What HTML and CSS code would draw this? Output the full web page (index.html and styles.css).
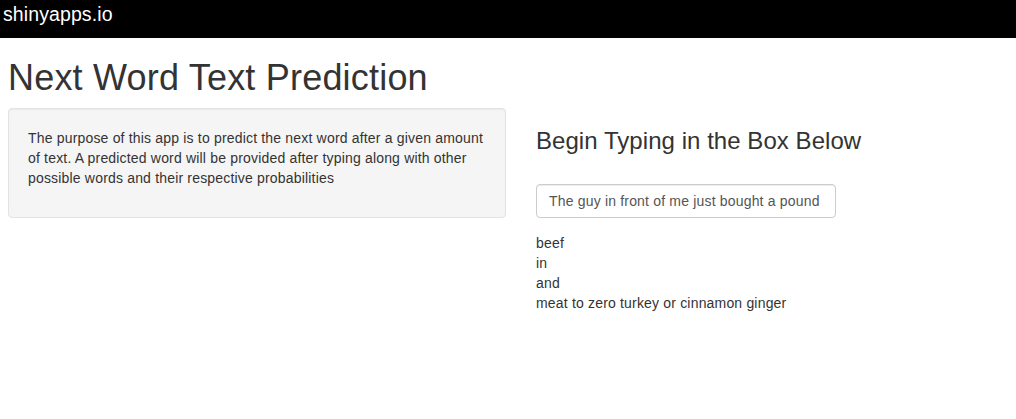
FILE: index.html
```html
<!DOCTYPE html>
<html>
<head>
<meta charset="utf-8">
<title>Next Word Text Prediction</title>
<link rel="stylesheet" href="styles.css">
</head>
<body>
<header class="topbar"><span class="brand">shinyapps.io</span></header>
<main class="page">
  <h1 class="title">Next Word Text Prediction</h1>
  <div class="row">
    <div class="col-left">
      <div class="well">
        <p>The purpose of this app is to predict the next word after a given amount of text. A predicted word will be provided after typing along with other possible words and their respective probabilities</p>
      </div>
    </div>
    <div class="col-right">
      <h3 class="subtitle">Begin Typing in the Box Below</h3>
      <div class="form-group">
        <input class="form-control" type="text" value="The guy in front of me just bought a pound">
      </div>
      <div class="output">
        <div>beef</div>
        <div>in</div>
        <div>and</div>
        <div>meat to zero turkey or cinnamon ginger</div>
      </div>
    </div>
  </div>
</main>
</body>
</html>
```

FILE: styles.css
```css
* { box-sizing: border-box; }
html, body { margin: 0; padding: 0; background: #fff; }
body {
  font-family: "Liberation Sans", Arial, Helvetica, sans-serif;
  font-size: 14px;
  line-height: 20px;
  color: #333;
  letter-spacing: 0.18px;
}
.topbar {
  background: #000;
  height: 38px;
  padding-left: 3px;
  display: flex;
  align-items: flex-start;
}
.brand {
  color: #fff;
  font-size: 19.5px;
  line-height: 20px;
  margin-top: 4px;
  letter-spacing: 0.1px;
}
.page { padding: 0 8px; }
.title {
  font-size: 36px;
  font-weight: 500;
  line-height: 1.1;
  margin: 20px 0 10px;
  letter-spacing: 0.2px;
}
.row {
  display: flex;
  align-items: flex-start;
}
.col-left { width: 498px; }
.col-right { margin-left: 30px; }
.well {
  background: #f5f5f5;
  border: 1px solid #e3e3e3;
  border-radius: 4px;
  padding: 19px;
  box-shadow: inset 0 1px 1px rgba(0,0,0,0.05);
  min-height: 110px;
}
.well p { margin: 0 0 10px; }
.subtitle {
  font-size: 24px;
  font-weight: 500;
  line-height: 1.1;
  margin: 20px 0 30px;
  letter-spacing: 0.05px;
}
.form-group { margin-bottom: 15px; }
.form-control {
  display: block;
  width: 300px;
  height: 34px;
  padding: 6px 12px;
  font-family: inherit;
  font-size: 14px;
  line-height: 20px;
  letter-spacing: 0.18px;
  color: #555;
  background: #fff;
  border: 1px solid #ccc;
  border-radius: 4px;
  box-shadow: inset 0 1px 1px rgba(0,0,0,0.075);
  outline: none;
}
.output { line-height: 20px; }
```
